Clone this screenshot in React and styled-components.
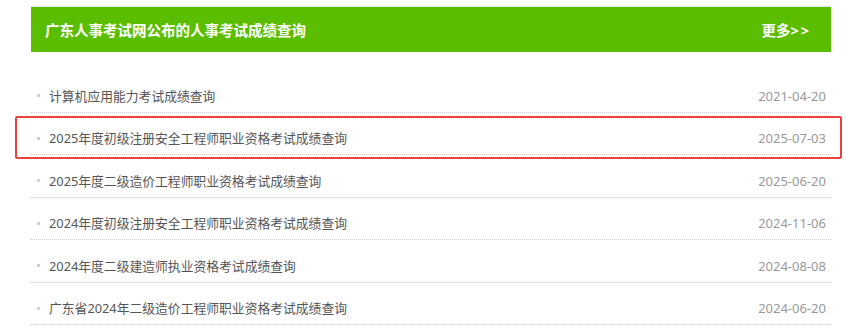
import React from "react";
import styled, { createGlobalStyle } from "styled-components";

const Global = createGlobalStyle`
  html, body { margin: 0; padding: 0; background: #fff; }
  body { font-family: "Noto Sans", "Noto Sans CJK SC", sans-serif; }
`;

const Page = styled.div`
  position: relative;
  width: 846px;
  height: 330px;
  padding: 6px 0 0 31px;
  box-sizing: border-box;
`;

const Panel = styled.div`
  width: 800px;
  border-top: 1px solid #e6e6e6;
`;

const Header = styled.div`
  height: 45px;
  background: #5bbd00;
  display: flex;
  align-items: center;
  justify-content: space-between;
  padding: 0 20px 0 14px;
  box-sizing: border-box;
  color: #fff;
  font-weight: 700;
`;

const Title = styled.h2`
  margin: 0;
  font-size: 14.5px;
  font-weight: 700;
  font-family: "Noto Sans CJK SC", sans-serif;
  letter-spacing: 0;
`;

const More = styled.a`
  font-size: 14.5px;
  font-weight: 700;
  color: #fff;
  text-decoration: none;
  font-family: "Noto Sans CJK SC", sans-serif;
  span { letter-spacing: 2px; font-family: "Noto Sans", sans-serif; }
`;

const List = styled.ul`
  list-style: none;
  margin: 18px 0 0;
  padding: 0;
`;

const Row = styled.li`
  height: 42.5px;
  box-sizing: border-box;
  border-bottom: 1px dotted #c8c8c8;
  display: flex;
  align-items: flex-end;
  justify-content: space-between;
  padding: 0 5px 7px 6px;
  font-size: 12.8px;
  line-height: 18px;
`;

const Name = styled.a`
  display: flex;
  align-items: center;
  color: #555;
  text-decoration: none;
  &::before {
    content: "";
    width: 3px;
    height: 3px;
    background: #d0d0d0;
    margin-right: 9px;
  }
`;

const Date = styled.span`
  color: #999;
  font-size: 13px;
`;

const Highlight = styled.div`
  position: absolute;
  left: 15px;
  top: 116px;
  width: 827px;
  height: 43px;
  box-sizing: border-box;
  border: 2px solid #e8423a;
  border-radius: 2px;
  pointer-events: none;
`;

const items = [
  ["计算机应用能力考试成绩查询", "2021-04-20"],
  ["2025年度初级注册安全工程师职业资格考试成绩查询", "2025-07-03"],
  ["2025年度二级造价工程师职业资格考试成绩查询", "2025-06-20"],
  ["2024年度初级注册安全工程师职业资格考试成绩查询", "2024-11-06"],
  ["2024年度二级建造师执业资格考试成绩查询", "2024-08-08"],
  ["广东省2024年二级造价工程师职业资格考试成绩查询", "2024-06-20"],
];

export default function App() {
  return (
    <>
      <Global />
      <Page>
        <Panel>
          <Header>
            <Title>广东人事考试网公布的人事考试成绩查询</Title>
            <More href="#">更多<span>&gt;&gt;</span></More>
          </Header>
          <List>
            {items.map(([t, d]) => (
              <Row key={t}>
                <Name href="#">{t}</Name>
                <Date>{d}</Date>
              </Row>
            ))}
          </List>
        </Panel>
        <Highlight />
      </Page>
    </>
  );
}
